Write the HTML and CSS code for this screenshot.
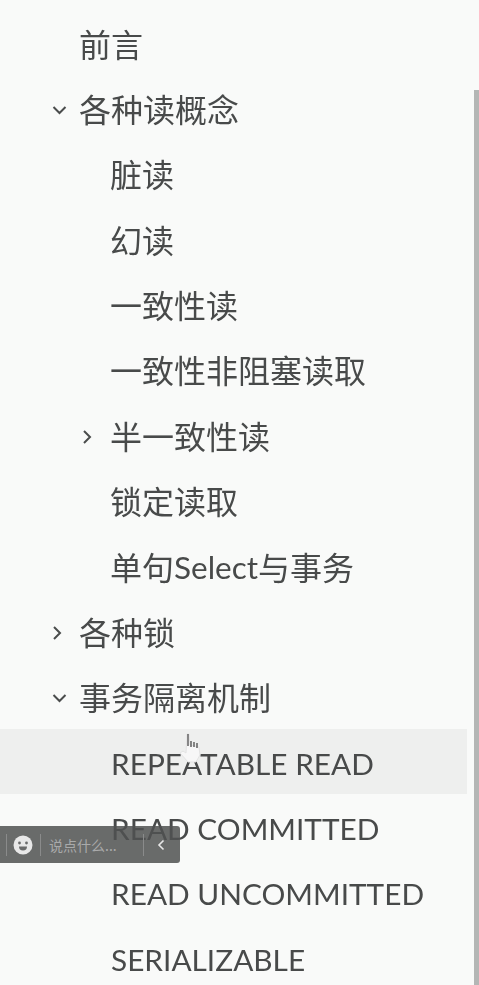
FILE: index.html
```html
<!DOCTYPE html>
<html lang="en">

<head>
    <meta charset="UTF-8">
    <title>目录</title>
    <link rel="stylesheet" href="styles.css">
</head>

<body>
    <ul class="toc">
        <li class="row"><span class="arrow"></span>前言</li>
        <li class="row">
            <span class="arrow"><svg width="16" height="16" viewBox="0 0 16 16"><path d="M1.500 5l6 6 6-6" /></svg></span>各种读概念
        </li>
        <li class="row sub"><span class="arrow"></span>脏读</li>
        <li class="row sub"><span class="arrow"></span>幻读</li>
        <li class="row sub"><span class="arrow"></span>一致性读</li>
        <li class="row sub"><span class="arrow"></span>一致性非阻塞读取</li>
        <li class="row sub">
            <span class="arrow"><svg width="16" height="16" viewBox="0 0 16 16"><path d="M2 2l6 6-6 6" /></svg></span>半一致性读
        </li>
        <li class="row sub"><span class="arrow"></span>锁定读取</li>
        <li class="row sub"><span class="arrow"></span>单句<span class="select">Select</span>与事务</li>
        <li class="row">
            <span class="arrow"><svg width="16" height="16" viewBox="0 0 16 16"><path d="M2 2l6 6-6 6" /></svg></span>各种锁
        </li>
        <li class="row">
            <span class="arrow"><svg width="16" height="16" viewBox="0 0 16 16"><path d="M1.500 5l6 6 6-6" /></svg></span>事务隔离机制
        </li>
        <li class="row sub hover"><span class="arrow"></span><span class="latin">REPEATABLE READ</span></li>
        <li class="row sub"><span class="arrow"></span><span class="latin">READ COMMITTED</span></li>
        <li class="row sub"><span class="arrow"></span><span class="latin">READ UNCOMMITTED</span></li>
        <li class="row sub"><span class="arrow"></span><span class="latin">SERIALIZABLE</span></li>
    </ul>

    <div class="edge"></div>

    <svg class="cursor" width="24" height="32" viewBox="0 0 24 32">
        <path class="hand" d="M9 2l2 0 1 11 9 2 1 8-4 7-8 0-8-9 3-2 3 2z" />
        <path class="fingers" d="M10 2v12M13 9v6M16 10v5M19 11v5" />
    </svg>

    <div class="chatbar">
        <span class="sep"></span>
        <svg class="smile" width="20" height="20" viewBox="0 0 20 20">
            <circle cx="10" cy="10" r="9.5" fill="#e8e8e8" />
            <circle cx="6.500" cy="8" r="1.400" fill="#6a6b6b" />
            <circle cx="13.500" cy="8" r="1.400" fill="#6a6b6b" />
            <path d="M6 11.500h8a4 4 0 0 1-8 0z" fill="#6a6b6b" />
        </svg>
        <span class="sep"></span>
        <span class="say">说点什么...</span>
        <span class="sep last"></span>
        <svg class="back" width="8" height="12" viewBox="0 0 8 12"><path d="M6.500 1.500L2 6l4.500 4.500" /></svg>
    </div>
</body>

</html>
```

FILE: styles.css
```css
html,
body {
    margin: 0;
    padding: 0;
}

body {
    position: relative;
    height: 985px;
    overflow: hidden;
    background-color: #f9faf9;
    color: #484a4a;
    font-family: "Noto Sans CJK SC", sans-serif;
}

.toc {
    list-style: none;
    margin: 0;
    padding: 10px 12px 0 0;
    filter: blur(0.4px);
}

.row {
    display: flex;
    align-items: center;
    height: 65.36px;
    padding-left: 47px;
    font-size: 32px;
    white-space: nowrap;
}

.sub {
    padding-left: 78px;
}

.hover {
    background-color: #eeefee;
}

.latin {
    margin-left: 1px;
    padding-top: 3px;
    font-family: Lato, sans-serif;
    font-size: 29.8px;
}

.select {
    padding-top: 2px;
    font-family: Lato, sans-serif;
    font-size: 31.5px;
}

.arrow {
    display: flex;
    align-items: center;
    width: 32px;
    height: 32px;
    padding-top: 4px;
    box-sizing: border-box;
    flex: none;
    margin-left: 5px;
    margin-right: -5px;
}

.sub .arrow {
    margin-left: 4px;
    margin-right: -4px;
}

.arrow svg path {
    fill: none;
    stroke: #4a4c4c;
    stroke-width: 2;
}

.edge {
    position: absolute;
    top: 90px;
    right: 0;
    bottom: 0;
    width: 5px;
    background-color: #b4b6b5;
}

.cursor {
    position: absolute;
    left: 178px;
    top: 732px;
    filter: blur(0.4px);
}

.hand {
    fill: #f7f7f7;
    stroke: #e2e2e2;
    stroke-width: 1;
}

.fingers {
    fill: none;
    stroke: #4c4c4c;
    stroke-width: 1.300;
}

.chatbar {
    position: absolute;
    left: 0;
    top: 826px;
    display: flex;
    align-items: center;
    width: 180px;
    height: 37px;
    border-radius: 0 3px 3px 0;
    background-color: rgba(80, 81, 81, 0.85);
    font-size: 14px;
    color: #a9aaaa;
}

.sep {
    width: 1px;
    height: 22px;
    margin-left: 6px;
    background-color: #8a8b8b;
}

.smile {
    margin-left: 6px;
}

.smile + .sep {
    margin-left: 7px;
}

.say {
    width: 94px;
    margin-left: 8px;
    white-space: nowrap;
}

.last {
    margin-left: 0;
}

.back {
    margin-left: 13px;
}

.back path {
    fill: none;
    stroke: #e8e8e8;
    stroke-width: 1.600;
}
```
